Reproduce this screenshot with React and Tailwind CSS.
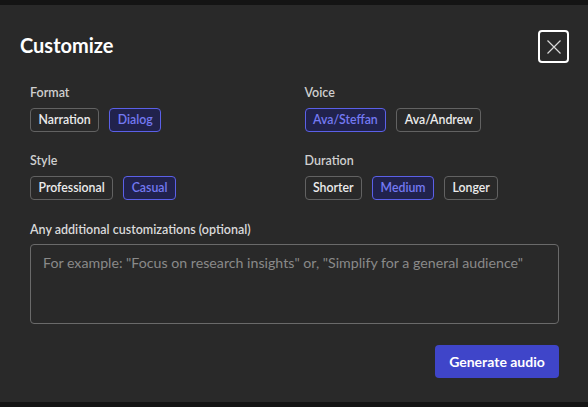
import React, { useState } from 'react';

const groups = [
  { label: 'Format', options: ['Narration', 'Dialog'], initial: 'Dialog' },
  { label: 'Voice', options: ['Ava/Steffan', 'Ava/Andrew'], initial: 'Ava/Steffan' },
  { label: 'Style', options: ['Professional', 'Casual'], initial: 'Casual' },
  { label: 'Duration', options: ['Shorter', 'Medium', 'Longer'], initial: 'Medium' },
];

const Chip = ({ text, active, onClick }) => (
  <button
    onClick={onClick}
    className={
      active
        ? 'h-[24px] px-[7.5px] rounded-[4px] border border-[#5b60e8] bg-[#21224c] text-[#7479f2] text-[12.3px] font-semibold leading-none'
        : 'h-[24px] px-[7.5px] rounded-[4px] border border-[#626262] text-[#ececec] text-[12.3px] font-semibold leading-none'
    }
  >
    {text}
  </button>
);

const OptionGroup = ({ group }) => {
  const [value, setValue] = useState(group.initial);
  return (
    <div>
      <div className="h-4 text-[12.5px] leading-4 font-semibold text-[#cfcfcf]">{group.label}</div>
      <div className="mt-[7px] flex gap-[10px]">
        {group.options.map((opt) => (
          <Chip key={opt} text={opt} active={opt === value} onClick={() => setValue(opt)} />
        ))}
      </div>
    </div>
  );
};

export default function App() {
  return (
    <div className="w-[588px] h-[407px] bg-[#141414] overflow-hidden" style={{ fontFamily: 'Lato, "Open Sans", sans-serif' }}>
      <div className="h-[5px]" />

      {/* Dialog */}
      <div className="h-[397px] bg-[#292929] flex flex-col">
        {/* Header */}
        <div className="h-[58px] pt-[25px] pl-5 pr-[19px] flex items-center justify-between">
          <h1 className="mb-[4px] text-[20px] leading-[26px] font-bold text-white">Customize</h1>
          <button className="w-[31px] h-[33px] rounded-[4px] border-2 border-white flex items-center justify-center">
            <svg width="14" height="14" viewBox="0 0 14 14" fill="none" stroke="#d8d8d8" strokeWidth="1.2">
              <path d="M0.5 0.5 L13.5 13.5 M13.5 0.5 L0.5 13.5" />
            </svg>
          </button>
        </div>

        {/* Body */}
        <div className="pl-[30px] pr-[29px]">
          <div className="mt-[22px] grid grid-cols-2 gap-x-5 gap-y-[21px]">
            {groups.map((g) => (
              <OptionGroup key={g.label} group={g} />
            ))}
          </div>

          <div className="mt-[22px] h-4 text-[12.5px] leading-4 font-semibold text-[#dadada]">
            Any additional customizations (optional)
          </div>
          <textarea
            className="mt-[6px] block w-full h-[80px] resize-none rounded-[4px] border border-[#6a6a6a] bg-transparent px-3 py-[7px] text-[14.2px] text-[#e0e0e0] placeholder-[#8a8a8a] outline-none"
            placeholder={'For example: "Focus on research insights" or, "Simplify for a general audience"'}
          />

          <div className="mt-[21px] flex justify-end">
            <button className="h-[33px] w-[124px] rounded-[4px] bg-[#3f45c9] text-white text-[14px] font-bold">
              Generate audio
            </button>
          </div>
        </div>
      </div>
    </div>
  );
}
